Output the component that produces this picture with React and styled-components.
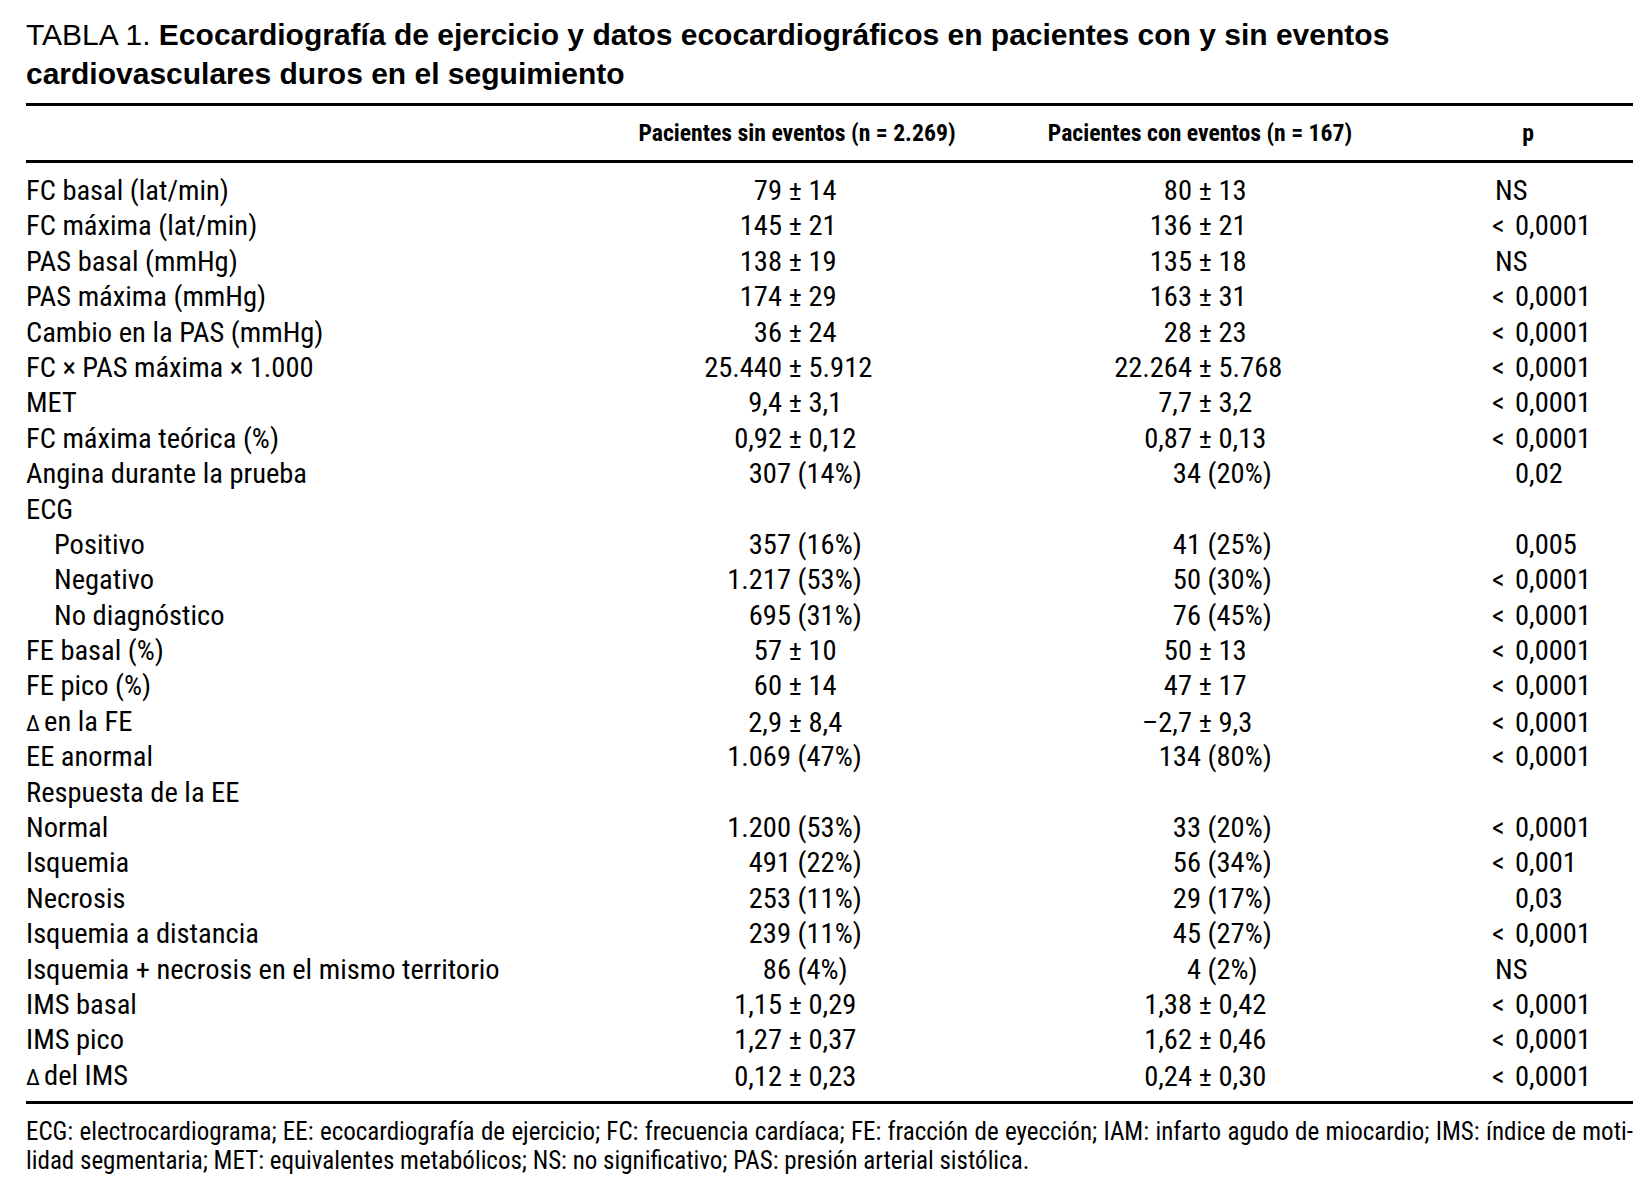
import React from "react";
import styled, { createGlobalStyle } from "styled-components";

const Global = createGlobalStyle`
  html, body {
    margin: 0;
    background: #fff;
    color: #000;
  }
`;

const Page = styled.div`
  width: 1607px;
  padding: 16px 10px 20px 26px;
  font-family: "Roboto Condensed", "Liberation Sans Narrow", "Liberation Sans", sans-serif;
`;

const Title = styled.h1`
  margin: 0;
  font-family: "Liberation Sans", Arial, sans-serif;
  font-size: 30px;
  line-height: 38.5px;
  font-weight: 700;

  span {
    font-weight: 400;
  }
`;

const Table = styled.div`
  margin-top: 10px;
  border-top: 3px solid #000;
  border-bottom: 3px solid #000;
`;

const Grid = styled.div`
  display: grid;
  grid-template-columns: 600px 342px 464px 192px 9px;
  align-items: center;
`;

const HeadRow = styled(Grid)`
  height: 54px;
  border-bottom: 3px solid #000;
`;

const HeadCell = styled.div`
  font-size: 23.7px;
  font-weight: 700;
  text-align: center;
  white-space: nowrap;
`;

const Body = styled.div`
  padding: 10px 0 8px;
`;

const Row = styled(Grid)`
  height: 35.4px;
  font-size: 28.5px;
  line-height: 35.4px;
  white-space: nowrap;
`;

const Label = styled.div`
  padding-left: ${(p) => (p.$indent ? "28px" : "0")};
`;

const Value = styled.div`
  display: flex;
`;

const Lead = styled.span`
  display: inline-block;
  width: ${(p) => p.$w}px;
  text-align: ${(p) => p.$align || "right"};
  flex-shrink: 0;
`;

const Rest = styled.span`
  white-space: pre;
`;

const PCell = styled.div`
  display: flex;
  padding-left: ${(p) => (p.$ns ? 63 : 60)}px;
`;

const Delta = styled.span`
  font-size: 0.8em;
  margin-right: 4px;
`;

const Note = styled.div`
  margin-top: 13px;
  font-size: 25px;
  line-height: 29px;
`;

const NoteLine = styled.div`
  text-align: ${(p) => (p.$justify ? "justify" : "left")};
  text-align-last: ${(p) => (p.$justify ? "justify" : "left")};
  white-space: nowrap;
`;

const rows = [
  ["FC basal (lat/min)", "79 ± 14", "80 ± 13", "NS"],
  ["FC máxima (lat/min)", "145 ± 21", "136 ± 21", "< 0,0001"],
  ["PAS basal (mmHg)", "138 ± 19", "135 ± 18", "NS"],
  ["PAS máxima (mmHg)", "174 ± 29", "163 ± 31", "< 0,0001"],
  ["Cambio en la PAS (mmHg)", "36 ± 24", "28 ± 23", "< 0,0001"],
  ["FC × PAS máxima × 1.000", "25.440 ± 5.912", "22.264 ± 5.768", "< 0,0001"],
  ["MET", "9,4 ± 3,1", "7,7 ± 3,2", "< 0,0001"],
  ["FC máxima teórica (%)", "0,92 ± 0,12", "0,87 ± 0,13", "< 0,0001"],
  ["Angina durante la prueba", "307 (14%)", "34 (20%)", "0,02"],
  ["ECG", "", "", ""],
  ["Positivo", "357 (16%)", "41 (25%)", "0,005", true],
  ["Negativo", "1.217 (53%)", "50 (30%)", "< 0,0001", true],
  ["No diagnóstico", "695 (31%)", "76 (45%)", "< 0,0001", true],
  ["FE basal (%)", "57 ± 10", "50 ± 13", "< 0,0001"],
  ["FE pico (%)", "60 ± 14", "47 ± 17", "< 0,0001"],
  ["Δ|en la FE", "2,9 ± 8,4", "–2,7 ± 9,3", "< 0,0001"],
  ["EE anormal", "1.069 (47%)", "134 (80%)", "< 0,0001"],
  ["Respuesta de la EE", "", "", ""],
  ["Normal", "1.200 (53%)", "33 (20%)", "< 0,0001"],
  ["Isquemia", "491 (22%)", "56 (34%)", "< 0,001"],
  ["Necrosis", "253 (11%)", "29 (17%)", "0,03"],
  ["Isquemia a distancia", "239 (11%)", "45 (27%)", "< 0,0001"],
  ["Isquemia + necrosis en el mismo territorio", "86 (4%)", "4 (2%)", "NS"],
  ["IMS basal", "1,15 ± 0,29", "1,38 ± 0,42", "< 0,0001"],
  ["IMS pico", "1,27 ± 0,37", "1,62 ± 0,46", "< 0,0001"],
  ["Δ|del IMS", "0,12 ± 0,23", "0,24 ± 0,30", "< 0,0001"],
];

// widths from the column edge to the right end of the leading number
const anchors = {
  2: { pm: 156, pct: 165 },
  3: { pm: 224, pct: 233 },
};

function ValueCell({ text, col }) {
  if (!text) return <div />;
  const i = text.indexOf(" ");
  const lead = text.slice(0, i);
  const rest = text.slice(i);
  const kind = text.includes("±") ? "pm" : "pct";
  return (
    <Value>
      <Lead $w={anchors[col][kind]}>{lead}</Lead>
      <Rest>{rest}</Rest>
    </Value>
  );
}

function PValue({ text }) {
  if (!text) return <div />;
  if (text === "NS") return <PCell $ns>NS</PCell>;
  const hasLt = text.startsWith("<");
  return (
    <PCell>
      <Lead $w={23} $align="left">{hasLt ? "<" : ""}</Lead>
      <span>{hasLt ? text.slice(2) : text}</span>
    </PCell>
  );
}

function LabelText({ text }) {
  if (text.startsWith("Δ|")) {
    return (
      <>
        <Delta>∆</Delta>
        {text.slice(2)}
      </>
    );
  }
  return text;
}

export default function App() {
  return (
    <Page>
      <Global />
      <Title>
        <span>TABLA 1. </span>Ecocardiografía de ejercicio y datos ecocardiográficos en pacientes con y sin eventos
        <br />
        cardiovasculares duros en el seguimiento
      </Title>
      <Table>
        <HeadRow>
          <div />
          <HeadCell>Pacientes sin eventos (n = 2.269)</HeadCell>
          <HeadCell>Pacientes con eventos (n = 167)</HeadCell>
          <HeadCell>p</HeadCell>
          <div />
        </HeadRow>
        <Body>
          {rows.map(([label, a, b, p, indent], i) => (
            <Row key={i}>
              <Label $indent={indent}>
                <LabelText text={label} />
              </Label>
              <ValueCell text={a} col={2} />
              <ValueCell text={b} col={3} />
              <PValue text={p} />
              <div />
            </Row>
          ))}
        </Body>
      </Table>
      <Note>
        <NoteLine $justify>
          ECG: electrocardiograma; EE: ecocardiografía de ejercicio; FC: frecuencia cardíaca; FE: fracción de eyección; IAM: infarto agudo de miocardio; IMS: índice de moti-
        </NoteLine>
        <NoteLine>
          lidad segmentaria; MET: equivalentes metabólicos; NS: no significativo; PAS: presión arterial sistólica.
        </NoteLine>
      </Note>
    </Page>
  );
}
